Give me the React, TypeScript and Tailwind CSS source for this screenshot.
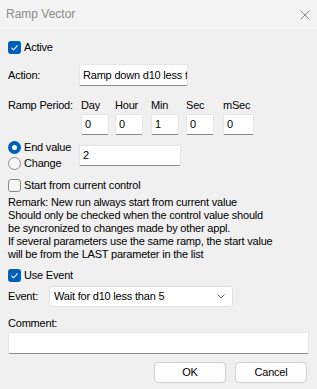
import React from "react";

function CheckBox({ checked }: { checked: boolean }) {
  return checked ? (
    <div className="w-[13px] h-[13px] rounded-[3px] bg-[#005fb8] flex items-center justify-center shrink-0">
      <svg width="9" height="9" viewBox="0 0 9 9">
        <path d="M1.5 4.8 L3.6 6.8 L7.6 2.4" fill="none" stroke="white" strokeWidth="1.1" />
      </svg>
    </div>
  ) : (
    <div className="w-[13px] h-[13px] rounded-[3px] border border-[#8a8a8a] bg-[#f6f6f6] shrink-0" />
  );
}

function Radio({ checked }: { checked: boolean }) {
  return checked ? (
    <div className="w-[13px] h-[13px] rounded-full bg-[#005fb8] flex items-center justify-center shrink-0">
      <div className="w-[5px] h-[5px] rounded-full bg-white" />
    </div>
  ) : (
    <div className="w-[13px] h-[13px] rounded-full border border-[#8a8a8a] bg-[#f6f6f6] shrink-0" />
  );
}

function Box({ w, h, text, className = "" }: { w: string; h: string; text?: string; className?: string }) {
  return (
    <div
      className={`${w} ${h} bg-white border border-[#e5e5e5] border-b-[#8a8a8a] rounded-[2px] flex items-center pl-[3px] overflow-hidden whitespace-nowrap ${className}`}
    >
      {text}
    </div>
  );
}

export default function App() {
  return (
    <div
      className="w-[317px] h-[389px] bg-[#f0f0f0] text-black text-[11px] leading-[13px] tracking-[-0.2px] overflow-hidden"
      style={{ fontFamily: '"Liberation Sans", Arial, sans-serif' }}
    >
      <div className="h-[29px] bg-[#f3f3f3] flex items-center justify-between pl-[6px] pr-[7px] tracking-normal">
        <span className="text-[12px] text-[#8c8c8c]">Ramp Vector</span>
        <svg width="10" height="10" viewBox="0 0 10 10">
          <path d="M0.5 0.5 L9.5 9.5 M9.5 0.5 L0.5 9.5" stroke="#8a8a8a" strokeWidth="1" />
        </svg>
      </div>

      <div className="pl-[8px] pr-[8px] flex flex-col">
        <div className="mt-[12px] flex items-center gap-[3px] h-[13px]">
          <CheckBox checked />
          <span>Active</span>
        </div>

        <div className="mt-[10px] flex items-center h-[22px]">
          <span className="w-[71px]">Action:</span>
          <Box w="w-[109px]" h="h-[22px]" text="Ramp down d10 less than 5" />
        </div>

        <div className="mt-[13px] flex">
          <span className="w-[73px] leading-[13px]">Ramp Period:</span>
          <div className="flex flex-col">
            <div className="flex h-[13px]">
              <span className="w-[34px]">Day</span>
              <span className="w-[36px]">Hour</span>
              <span className="w-[35px]">Min</span>
              <span className="w-[37px]">Sec</span>
              <span>mSec</span>
            </div>
            <div className="flex mt-[2px]">
              <Box w="w-[28px]" h="h-[21px]" text="0" className="mr-[6px]" />
              <Box w="w-[28px]" h="h-[21px]" text="0" className="mr-[8px]" />
              <Box w="w-[28px]" h="h-[21px]" text="1" className="mr-[7px]" />
              <Box w="w-[28px]" h="h-[21px]" text="0" className="mr-[9px]" />
              <Box w="w-[31px]" h="h-[21px]" text="0" />
            </div>
          </div>
        </div>

        <div className="mt-[4px] flex items-center">
          <div className="w-[71px] flex flex-col">
            <div className="h-[16px] flex items-center gap-[3px]">
              <Radio checked />
              <span>End value</span>
            </div>
            <div className="h-[16px] flex items-center gap-[3px]">
              <Radio checked={false} />
              <span>Change</span>
            </div>
          </div>
          <Box w="w-[102px]" h="h-[21px]" text="2" />
        </div>

        <div className="mt-[8px] flex items-center gap-[3px] h-[13px]">
          <CheckBox checked={false} />
          <span>Start from current control</span>
        </div>

        <div className="mt-[4px] leading-[13px]">
          <div>Remark: New run always start from current value</div>
          <div>Should only be checked when the control value should</div>
          <div>be syncronized to changes made by other appl.</div>
          <div>If several parameters use the same ramp, the start value</div>
          <div>will be from the LAST parameter in the list</div>
        </div>

        <div className="mt-[8px] flex items-center gap-[3px] h-[13px]">
          <CheckBox checked />
          <span>Use Event</span>
        </div>

        <div className="mt-[4px] flex items-center h-[21px]">
          <span className="w-[41px]">Event:</span>
          <div className="w-[184px] h-[21px] bg-white border border-[#e0e0e0] rounded-[3px] flex items-center justify-between pl-[4px] pr-[7px]">
            <span>Wait for d10 less than 5</span>
            <svg width="8" height="5" viewBox="0 0 8 5">
              <path d="M0.5 0.5 L4 4 L7.5 0.5" fill="none" stroke="#6a6a6a" strokeWidth="1" />
            </svg>
          </div>
        </div>

        <div className="mt-[10px] h-[13px]">Comment:</div>

        <Box w="w-[301px]" h="h-[22px]" className="mt-[2px]" />

        <div className="mt-[8px] flex justify-end gap-[9px] pr-[2px]">
          <button className="w-[72px] h-[21px] bg-[#fdfdfd] border border-[#d0d0d0] rounded-[4px] text-[11px]">OK</button>
          <button className="w-[72px] h-[21px] bg-[#fdfdfd] border border-[#d0d0d0] rounded-[4px] text-[11px]">Cancel</button>
        </div>
      </div>
    </div>
  );
}
